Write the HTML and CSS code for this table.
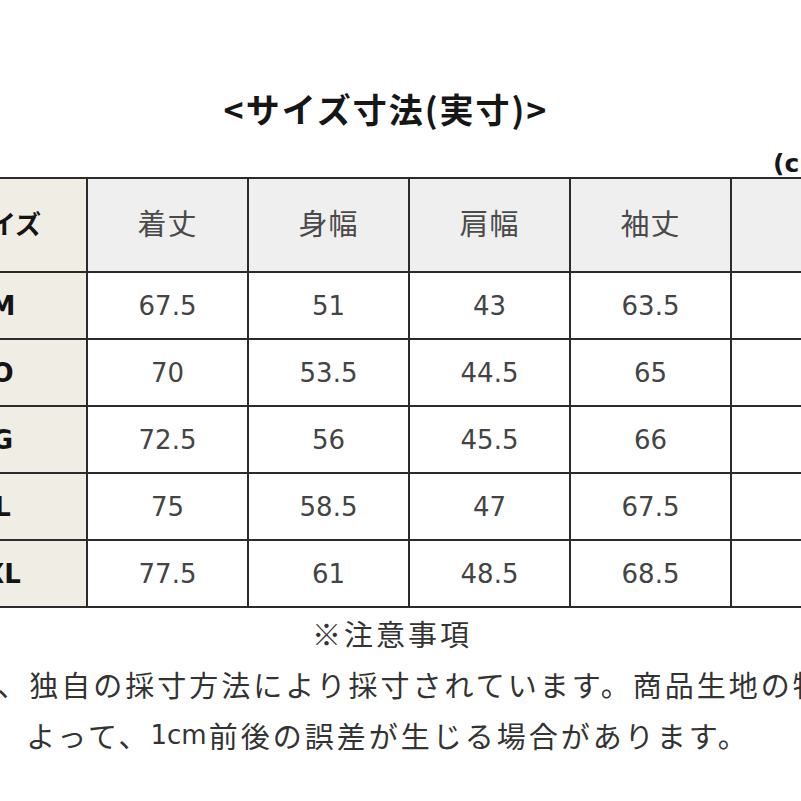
FILE: index.html
```html
<!DOCTYPE html>
<html lang="ja">
<head>
<meta charset="utf-8">
<title>サイズ寸法</title>
<link rel="stylesheet" href="styles.css">
</head>
<body>
<div class="page">
  <h1 class="title">&lt;サイズ寸法(実寸)&gt;</h1>
  <div class="unit">(cm)</div>
  <table class="chart">
    <colgroup>
      <col class="c"><col class="c"><col class="c"><col class="c"><col class="c"><col class="c">
    </colgroup>
    <tr class="head">
      <th class="size">サイズ</th>
      <th>着丈</th>
      <th>身幅</th>
      <th>肩幅</th>
      <th>袖丈</th>
      <th></th>
    </tr>
    <tr><th class="size">M</th><td>67.5</td><td>51</td><td>43</td><td>63.5</td><td></td></tr>
    <tr><th class="size">O</th><td>70</td><td>53.5</td><td>44.5</td><td>65</td><td></td></tr>
    <tr><th class="size">G</th><td>72.5</td><td>56</td><td>45.5</td><td>66</td><td></td></tr>
    <tr><th class="size">L</th><td>75</td><td>58.5</td><td>47</td><td>67.5</td><td></td></tr>
    <tr><th class="size">XL</th><td>77.5</td><td>61</td><td>48.5</td><td>68.5</td><td></td></tr>
  </table>
  <div class="notes">
    <p class="line first">※注意事項</p>
    <p class="line second">当店では、独自の採寸方法により採寸されています。商品生地の特性に</p>
    <p class="line">よって、<span class="latin">1cm</span>前後の誤差が生じる場合があります。</p>
  </div>
</div>
</body>
</html>
```
FILE: styles.css
```css
html, body {
  margin: 0;
  padding: 0;
  background: #ffffff;
}
body {
  width: 801px;
  height: 801px;
  overflow: hidden;
}
.page {
  width: 801px;
  overflow: hidden;
}
.title {
  width: 772px;
  margin: 89px 0 0 0;
  height: 40px;
  line-height: 40px;
  text-align: center;
  font-family: "Noto Sans CJK JP", sans-serif;
  font-weight: 700;
  font-size: 34px;
  letter-spacing: 2px;
  color: #161616;
}
.unit {
  margin-top: 22px;
  height: 26px;
  line-height: 26px;
  padding-left: 773px;
  white-space: nowrap;
  font-family: "DejaVu Sans", sans-serif;
  font-weight: 700;
  font-size: 25px;
  color: #161616;
}
.chart {
  margin-left: -75px;
  width: 966px;
  table-layout: fixed;
  border-collapse: collapse;
  border: 2px solid #2b2b2b;
}
.chart col.c {
  width: 161px;
}
.chart th, .chart td {
  border: 2px solid #2b2b2b;
  padding: 0;
  text-align: center;
  vertical-align: middle;
  white-space: nowrap;
  overflow: hidden;
}
.chart tr {
  height: 67px;
}
.chart tr.head {
  height: 94px;
}
.chart tr.head th {
  background: #efefef;
  font-family: "Noto Sans CJK JP", sans-serif;
  font-weight: 400;
  font-size: 29px;
  letter-spacing: 1px;
  color: #4a4a4a;
  padding-bottom: 6px;
}
.chart td {
  background: #ffffff;
  font-family: "DejaVu Sans", sans-serif;
  font-size: 26px;
  color: #444444;
}
.chart th.size,
.chart tr.head th.size {
  background: #f0ede4;
  font-family: "DejaVu Sans", "Noto Sans CJK JP", sans-serif;
  font-weight: 700;
  font-size: 26px;
  letter-spacing: 0;
  color: #141414;
  padding-right: 8px;
}
.notes {
  width: 776px;
}
.line {
  margin: 0;
  height: 51px;
  line-height: 51px;
  display: flex;
  justify-content: center;
  white-space: nowrap;
  font-family: "Noto Sans CJK JP", sans-serif;
  font-size: 29px;
  letter-spacing: 3px;
  color: #333333;
}
.line.first {
  padding-left: 8px;
}
.line.second {
  padding-right: 18px;
}
.latin {
  font-family: "DejaVu Sans", sans-serif;
  font-size: 26px;
  letter-spacing: 0;
  padding: 0 2px 0 0;
}
```
